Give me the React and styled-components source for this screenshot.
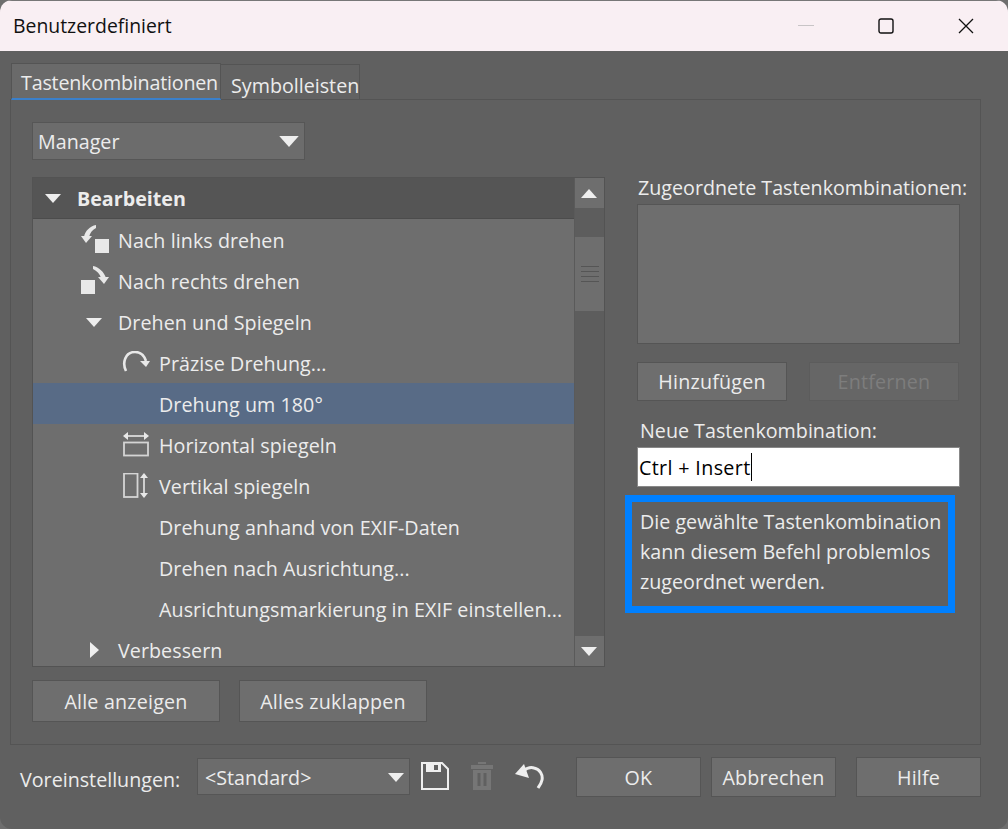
import React from "react";
import styled, { createGlobalStyle } from "styled-components";

const Global = createGlobalStyle`
  html, body { margin: 0; padding: 0; background: #6e6e6e; }
  * { box-sizing: border-box; }
  body { font-family: "Open Sans", "Noto Sans", "Liberation Sans", sans-serif; }
`;

const Win = styled.div`
  width: 1008px; height: 829px; display: flex; flex-direction: column;
  background: #606060; border-radius: 12px; overflow: hidden;
  color: #ececec; font-size: 19.7px;
`;
const TitleBar = styled.div`
  height: 51px; flex: none; background: #f9eff3; display: flex; align-items: center;
  padding: 0 2px 1px 13px; color: #111; font-size: 19.4px; border-top: 1px solid #777;
`;
const Title = styled.span`flex: 1;`;
const WinBtn = styled.div`
  width: 80px; height: 50px; display: flex; align-items: center; justify-content: center;
`;
const Body = styled.div`flex: 1; padding: 12px 27px 0 10px; display: flex; flex-direction: column;`;
const TabStrip = styled.div`height: 36px; display: flex; align-items: flex-end; padding-left: 1px; position: relative; z-index: 1;`;
const Tab = styled.div`
  height: ${p => (p.$active ? 37 : 35)}px; width: ${p => p.$w}px;
  margin-bottom: ${p => (p.$active ? -1 : 0)}px;
  background: ${p => (p.$active ? "#6a6a6a" : "#626262")};
  border: 1px solid #545454; border-bottom: ${p => (p.$active ? "2px solid #3a80cc" : "none")};
  ${p => !p.$active && "border-left: none;"}
  display: flex; align-items: center; white-space: nowrap;
  padding: ${p => (p.$active ? "3px 0 0 9px" : "6px 0 0 10px")};
  letter-spacing: ${p => (p.$active ? "-0.2px" : "0")};
`;
const Pane = styled.div`
  height: 646px; border: 1px solid #545454; padding: 22px 21px 0; display: flex;
`;
const LeftCol = styled.div`width: 573px; flex: none; display: flex; flex-direction: column;`;
const RightCol = styled.div`margin-left: 32px; padding-top: 55px; width: 323px; flex: none; display: flex; flex-direction: column;`;
const Combo = styled.div`
  width: ${p => p.$w}px; height: ${p => p.$h}px; flex: none; background: #6c6c6c; border: 1px solid #565656;
  display: flex; align-items: center; justify-content: space-between; padding: 1px 5px 0 ${p => p.$pl}px;
`;
const Tri = styled.svg`flex: none; display: block;`;
const TreeBox = styled.div`
  margin-top: 17px; height: 490px; border: 1px solid #535353; display: flex; background: #6e6e6e; overflow: hidden;
`;
const TreeList = styled.div`flex: 1; min-width: 0; display: flex; flex-direction: column;`;
const HeaderRow = styled.div`
  height: 41px; flex: none; background: #555; border-bottom: 1px solid #4c4c4c; display: flex; align-items: center;
  font-weight: 700; padding-left: 3px;
`;
const Row = styled.div`
  height: 41px; flex: none; display: flex; align-items: center; padding-left: ${p => p.$depth * 41 + 3}px;
  padding-top: 1px; letter-spacing: 0.06px;
  background: ${p => (p.$sel ? "#586b86" : "transparent")}; white-space: nowrap;
`;
const Slot = styled.span`
  width: 41px; flex: none; display: flex; justify-content: flex-end; align-items: center; padding-right: ${p => p.$pr}px;
`;
const Bar = styled.div`width: 30px; flex: none; border-left: 1px solid #5a5a5a; background: #5d5d5d; display: flex; flex-direction: column;`;
const BarBtn = styled.div`height: 30px; flex: none; background: #6e6e6e; display: flex; align-items: center; justify-content: center; padding-right: 2px;`;
const Thumb = styled.div`
  margin-top: 29px; height: 74px; flex: none; background: #6e6e6e; display: flex; flex-direction: column; justify-content: center;
  gap: 4px; align-items: center;
`;
const Grip = styled.i`display: block; width: 18px; height: 1px; background: #555;`;
const Spacer = styled.div`flex: 1;`;
const BtnRow = styled.div`display: flex; gap: ${p => p.$gap}px; margin-top: ${p => p.$mt}px;`;
const Btn = styled.div`
  width: ${p => p.$w}px; height: ${p => p.$h}px; background: ${p => (p.$off ? "#666" : "#6e6e6e")};
  border: 1px solid ${p => (p.$off ? "#5c5c5c" : "#555")}; color: ${p => (p.$off ? "#7d7d7d" : "#ececec")};
  display: flex; align-items: center; justify-content: center; letter-spacing: 0.2px;
  margin-left: ${p => p.$ml || 0}px; padding-top: ${p => p.$pt || 0}px;
`;
const Label = styled.div`height: ${p => p.$h}px; padding-left: ${p => p.$pl}px; padding-top: ${p => p.$pt || 0}px; white-space: nowrap; line-height: 22px;`;
const AssignedBox = styled.div`height: 140px; background: #6e6e6e; border: 1px solid #555; margin-top: 5px;`;
const Input = styled.div`
  height: 40px; background: #fff; border: 1px solid #888; color: #000; display: flex; align-items: center; padding-left: 1px; letter-spacing: 0.35px;
`;
const Caret = styled.i`display: block; width: 1px; height: 28px; background: #000;`;
const Notice = styled.div`
  margin: 8px 0 0 -12px; width: 330px; height: 118px; border: 7px solid #0080ff; padding: 5px 0 0 8px; line-height: 30px;
`;
const Footer = styled.div`flex: 1; display: flex; align-items: flex-start; padding: 12px 27px 0 20px;`;
const FooterLabel = styled.div`width: 177px; height: 40px; flex: none; display: flex; align-items: center; padding-top: 5px;`;
const ComboWrap = styled.div`margin-top: 1px;`;
const IconBtn = styled.div`margin-top: 5px; margin-left: ${p => p.$ml}px; flex: none;`;
const Ico = styled.svg`display: block;`;

const Down = ({ w = 16, h = 9, fill = "#eee" }) => (
  <Tri width={w} height={h} viewBox="0 0 16 9"><polygon points="0,0 16,0 8,9" fill={fill} /></Tri>
);
const Right = () => (
  <Tri width={9} height={16} viewBox="0 0 9 16"><polygon points="0,0 9,8 0,16" fill="#eee" /></Tri>
);
const Up = () => (
  <Tri width={16} height={9} viewBox="0 0 16 9"><polygon points="0,9 16,9 8,0" fill="#eee" /></Tri>
);

const RotL = () => (
  <Ico width="28" height="30" viewBox="0 0 28 30">
    <rect x="14" y="14" width="14" height="14" fill="#e8e8e8" />
    <path d="M15 0 C9 1 4 6 3 12 L8 12 C9 8 11 5 15 3 Z" fill="#e8e8e8" />
    <polygon points="0,11 11,11 5,18" fill="#e8e8e8" />
  </Ico>
);
const RotR = () => (
  <Ico width="28" height="30" viewBox="0 0 28 30">
    <rect x="0" y="14" width="14" height="14" fill="#e8e8e8" />
    <path d="M12 0 C18 1 23 6 25 12 L20 12 C19 8 16 5 12 3 Z" fill="#e8e8e8" />
    <polygon points="17,11 28,11 23,18" fill="#e8e8e8" />
  </Ico>
);
const Precise = () => (
  <Ico width="28" height="24" viewBox="0 0 28 24">
    <path d="M4 20 C0 12 3 1 13 1 C18 1 22 4 24 10" stroke="#e8e8e8" strokeWidth="2.6" fill="none" />
    <polygon points="18,10 28,10 24,16" fill="#e8e8e8" />
  </Ico>
);
const FlipH = () => (
  <Ico width="26" height="26" viewBox="0 0 26 26">
    <rect x="1" y="10.5" width="24" height="13" stroke="#d4d4d4" strokeWidth="1.8" fill="none" />
    <path d="M2 4 H24" stroke="#e8e8e8" strokeWidth="1.6" />
    <polygon points="0,4 5,0 5,8" fill="#e8e8e8" />
    <polygon points="26,4 21,0 21,8" fill="#e8e8e8" />
  </Ico>
);
const FlipV = () => (
  <Ico width="26" height="26" viewBox="0 0 26 26">
    <rect x="1" y="0.5" width="13.5" height="23.5" stroke="#d4d4d4" strokeWidth="1.8" fill="none" />
    <path d="M21 2 V23" stroke="#e8e8e8" strokeWidth="1.6" />
    <polygon points="21,0 17,5 25,5" fill="#e8e8e8" />
    <polygon points="21,25 17,20 25,20" fill="#e8e8e8" />
  </Ico>
);
const Save = () => (
  <Ico width="28" height="28" viewBox="0 0 28 28">
    <path d="M1 1 H21 L27 7 V27 H1 Z" stroke="#eee" strokeWidth="2" fill="none" />
    <rect x="5" y="1" width="15" height="9" fill="#eee" />
    <rect x="13" y="3" width="4" height="5" fill="#606060" />
  </Ico>
);
const Trash = () => (
  <Ico width="22" height="28" viewBox="0 0 22 28">
    <rect x="7" y="0" width="8" height="2" fill="#767676" />
    <rect x="0" y="3" width="22" height="4" fill="#767676" />
    <path d="M2 8 H20 V28 H2 Z M6.5 11 V24 H9.5 V11 Z M12.5 11 V24 H15.5 V11 Z" fill="#767676" fillRule="evenodd" />
  </Ico>
);
const Undo = () => (
  <Ico width="29" height="28" viewBox="0 0 29 28">
    <path d="M8 9 C12 6 16 5 19 6 C25 7 28 13 27 18 C26.5 21 25 23 23 26" stroke="#eee" strokeWidth="3" fill="none" />
    <polygon points="0,12 9,2 14,16" fill="#eee" />
  </Ico>
);

const rows = [
  { d: 1, t: "Nach links drehen", i: <RotL />, pr: 9 },
  { d: 1, t: "Nach rechts drehen", i: <RotR />, pr: 9 },
  { d: 1, t: "Drehen und Spiegeln", i: <Down />, pr: 16 },
  { d: 2, t: "Präzise Drehung...", i: <Precise />, pr: 9 },
  { d: 2, t: "Drehung um 180°", sel: true },
  { d: 2, t: "Horizontal spiegeln", i: <FlipH />, pr: 10 },
  { d: 2, t: "Vertikal spiegeln", i: <FlipV />, pr: 10 },
  { d: 2, t: "Drehung anhand von EXIF-Daten" },
  { d: 2, t: "Drehen nach Ausrichtung..." },
  { d: 2, t: "Ausrichtungsmarkierung in EXIF einstellen..." },
  { d: 1, t: "Verbessern", i: <Right />, pr: 19 },
];

export default function App() {
  return (
    <Win>
      <Global />
      <TitleBar>
        <Title>Benutzerdefiniert</Title>
        <WinBtn>
          <svg width="16" height="2"><rect width="16" height="1" fill="#c8c4c6" /></svg>
        </WinBtn>
        <WinBtn>
          <svg width="16" height="16" viewBox="0 0 16 16"><rect x="1" y="1" width="14" height="14" rx="2" fill="none" stroke="#111" strokeWidth="1.4" /></svg>
        </WinBtn>
        <WinBtn>
          <svg width="16" height="16" viewBox="0 0 16 16"><path d="M1 1 L15 15 M15 1 L1 15" stroke="#111" strokeWidth="1.3" /></svg>
        </WinBtn>
      </TitleBar>
      <Body>
        <TabStrip>
          <Tab $active $w={210}>Tastenkombinationen</Tab>
          <Tab $w={139}>Symbolleisten</Tab>
        </TabStrip>
        <Pane>
          <LeftCol>
            <Combo $w={273} $h={38} $pl={5}>Manager<Down w={20} h={11} /></Combo>
            <TreeBox>
              <TreeList>
                <HeaderRow>
                  <Slot $pr={16}><Down /></Slot>
                  Bearbeiten
                </HeaderRow>
                {rows.map(r => (
                  <Row key={r.t} $depth={r.d} $sel={r.sel}>
                    <Slot $pr={r.pr}>{r.i}</Slot>
                    {r.t}
                  </Row>
                ))}
              </TreeList>
              <Bar>
                <BarBtn><Up /></BarBtn>
                <Thumb><Grip /><Grip /><Grip /><Grip /></Thumb>
                <Spacer />
                <BarBtn><Down /></BarBtn>
              </Bar>
            </TreeBox>
            <BtnRow $gap={19} $mt={13}>
              <Btn $w={188} $h={42}>Alle anzeigen</Btn>
              <Btn $w={188} $h={42}>Alles zuklappen</Btn>
            </BtnRow>
          </LeftCol>
          <RightCol>
            <Label $h={22} $pl={1}>Zugeordnete Tastenkombinationen:</Label>
            <AssignedBox />
            <BtnRow $gap={22} $mt={18}>
              <Btn $w={150} $h={39}>Hinzufügen</Btn>
              <Btn $w={150} $h={39} $off>Entfernen</Btn>
            </BtnRow>
            <Label $h={46} $pl={3} $pt={19}>Neue Tastenkombination:</Label>
            <Input>Ctrl + Insert<Caret /></Input>
            <Notice>Die gewählte Tastenkombination<br />kann diesem Befehl problemlos<br />zugeordnet werden.</Notice>
          </RightCol>
        </Pane>
      </Body>
      <Footer>
        <FooterLabel>Voreinstellungen:</FooterLabel>
        <ComboWrap><Combo $w={213} $h={37} $pl={7}>&lt;Standard&gt;<Down /></Combo></ComboWrap>
        <IconBtn $ml={11}><Save /></IconBtn>
        <IconBtn $ml={22}><Trash /></IconBtn>
        <IconBtn $ml={22}><Undo /></IconBtn>
        <Spacer />
        <BtnRow $gap={10} $mt={0}>
          <Btn $w={125} $h={40} $pt={1}>OK</Btn>
          <Btn $w={125} $h={40} $pt={1}>Abbrechen</Btn>
          <Btn $w={125} $h={40} $pt={1} $ml={10}>Hilfe</Btn>
        </BtnRow>
      </Footer>
    </Win>
  );
}
